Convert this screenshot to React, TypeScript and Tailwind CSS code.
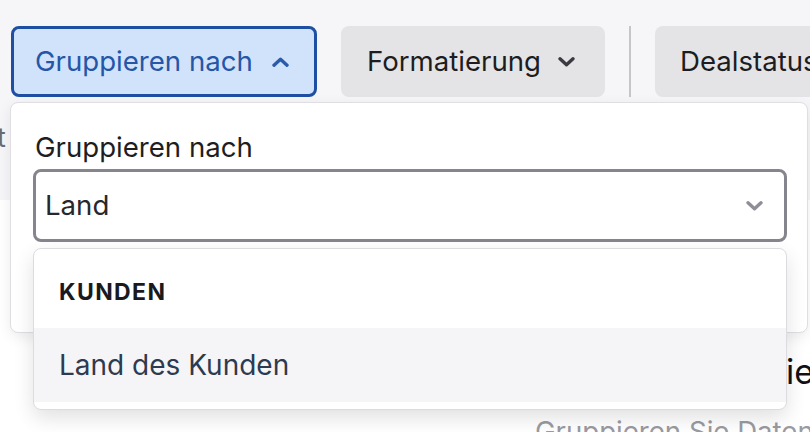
import React from 'react';

const Chevron = ({ up = false, className = '' }: { up?: boolean; className?: string }) => (
  <svg width="17" height="10" viewBox="0 0 17 10" className={className} fill="none">
    <polyline
      points={up ? '2,8.2 8.5,2.3 15,8.2' : '2,1.8 8.5,7.7 15,1.8'}
      stroke="currentColor"
      strokeWidth="3.4"
      strokeLinecap="round"
      strokeLinejoin="round"
    />
  </svg>
);

export default function App() {
  return (
    <div className="relative w-[810px] h-[432px] overflow-hidden bg-white font-[Inter,'Noto_Sans',sans-serif]">
      {/* Toolbar */}
      <div className="h-[200px] bg-[#f6f6f8] pt-[26px]">
        <div className="flex h-[71px] gap-[24px] pl-[11px]">
          <button className="flex w-[306px] shrink-0 items-center gap-[19px] rounded-[8px] border-[3px] border-[#1f4fa2] bg-[#d1e3fa] pl-[21px] text-[27.6px] text-[#2556a7]">
            <span>Gruppieren nach</span>
            <Chevron up className="text-[#2c5ba9]" />
          </button>
          <button className="flex w-[264px] shrink-0 items-center gap-[17px] rounded-[8px] bg-[#e4e4e7] pl-[26px] text-[27.6px] text-[#1d1d21]">
            <span>Formatierung</span>
            <Chevron className="text-[#3a3a40]" />
          </button>
          <div className="w-[2px] shrink-0 bg-[#c6c6ca]" />
          <button className="flex w-[220px] shrink-0 items-center rounded-[8px] bg-[#e4e4e7] pl-[25px] text-[27.6px] text-[#1d1d21]">
            <span>Dealstatus</span>
          </button>
        </div>
        <div className="mt-[24px] -ml-[3px] text-[27px] leading-[34px] text-[#6b6b73]">t</div>
      </div>

      {/* Empty state behind the popover */}
      <div className="pt-[152px]">
        <div className="flex whitespace-nowrap text-[34px] leading-[40px] text-[#111114]">
          <span className="w-[786px] shrink-0 text-right">Datengrupp</span>
          <span>ierung</span>
        </div>
        <div className="mt-[22px] pl-[535px] whitespace-nowrap text-[27.6px] leading-[34px] text-[#9a9aa2]">
          Gruppieren Sie Daten nach Feldern
        </div>
      </div>

      {/* Popover */}
      <div className="absolute left-[10px] top-[102px] h-[231px] w-[798px] rounded-[8px] border border-[#dedee3] bg-white px-[22px] pt-[27px] shadow-[0_4px_14px_rgba(0,0,0,0.08)]">
        <div className="pl-[2px] text-[27.6px] leading-[34px] text-[#1e1e22]">Gruppieren nach</div>
        <div className="mt-[5px] flex h-[73px] w-[754px] items-center justify-between rounded-[8px] border-[3px] border-[#85858e] pl-[9px] pr-[21px]">
          <span className="text-[27.6px] text-[#28282c]">Land</span>
          <Chevron className="text-[#8e8e96]" />
        </div>
      </div>

      {/* Select menu */}
      <div className="absolute left-[33px] top-[248px] h-[162px] w-[754px] overflow-hidden rounded-[8px] border border-[#dcdce0] bg-white shadow-[0_8px_20px_rgba(0,0,0,0.12)]">
        <div className="flex h-[79px] items-center pl-[25px] pt-[7px] text-[23px] font-bold tracking-[0.06em] text-[#1a1a1e]">
          KUNDEN
        </div>
        <div className="flex h-[74px] items-center bg-[#f5f5f7] pl-[25px] text-[28px] text-[#2e3a4f]">
          Land des Kunden
        </div>
      </div>
    </div>
  );
}
